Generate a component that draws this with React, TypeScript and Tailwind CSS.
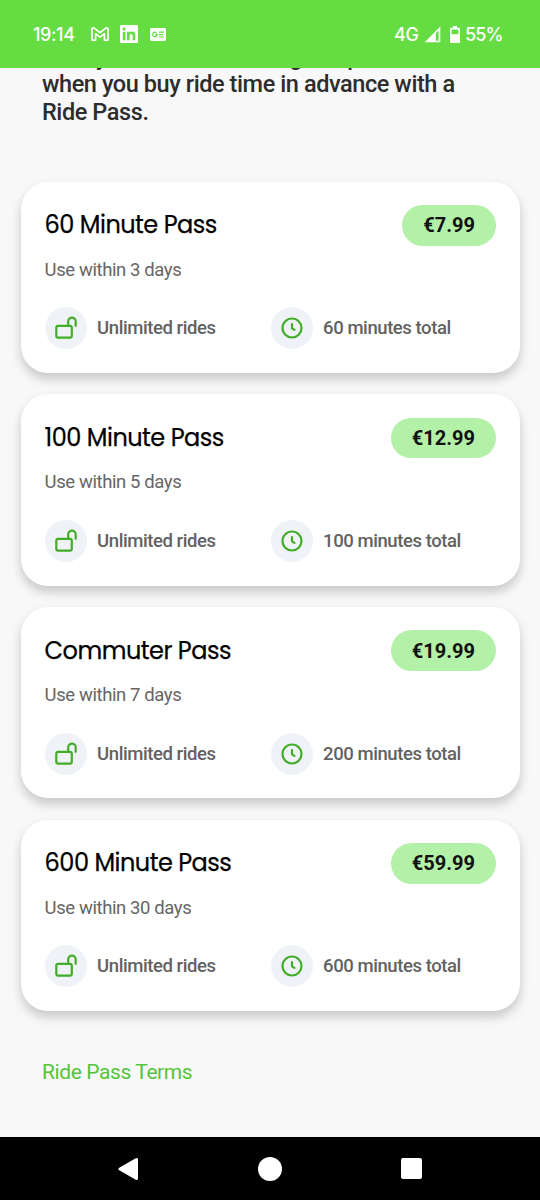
import { ReactNode } from 'react';

const passes = [
  { name: '60 Minute Pass', price: '€7.99', days: 3, minutes: 60 },
  { name: '100 Minute Pass', price: '€12.99', days: 5, minutes: 100 },
  { name: 'Commuter Pass', price: '€19.99', days: 7, minutes: 200 },
  { name: '600 Minute Pass', price: '€59.99', days: 30, minutes: 600 },
];

function StatusBar() {
  return (
    <header className="h-[68px] shrink-0 bg-[#64dc42] text-white flex items-center justify-between pl-[33px] pr-[37.5px] font-['Inter',sans-serif] text-[18px] font-medium relative z-10">
      <div className="flex items-center">
        <span className="w-[57.5px] tracking-[-0.4px]">19:14</span>
        <svg className="w-[18px] h-[14px]" viewBox="0 0 18 14" fill="none" stroke="currentColor" strokeWidth="1.7" strokeLinejoin="round">
          <path d="M1 2.2Q1 .9 2.2.9h.7L9 5.7 15.1.9h.7Q17 .9 17 2.2v10.9h-3.600V6.700L9 10.200 4.600 6.700v6.400H1z" />
        </svg>
        <svg className="w-[18px] h-[18px] ml-[11px]" viewBox="0 0 18 18">
          <rect width="18" height="18" rx="1.2" fill="currentColor" />
          <g fill="#64dc42">
            <circle cx="4.1" cy="4.1" r="1.5" />
            <path d="M2.800 6.800h2.600v8.400H2.800zM7 6.800h2.500v1.200c.6-.9 1.500-1.400 2.600-1.400 2.500 0 3.200 1.600 3.200 4v4.600h-2.600v-4.200c0-1.200-.2-2.100-1.400-2.100-1.200 0-1.700.9-1.700 2.100v4.200H7z" />
          </g>
        </svg>
        <svg className="w-[16px] h-[13px] ml-[12px]" viewBox="0 0 16 13">
          <rect width="16" height="13" rx="1.4" fill="currentColor" />
          <g fill="none" stroke="#64dc42" strokeWidth="1.2">
            <path d="M6.700 4.900A2.300 2.300 0 1 0 7.200 6.700H5" />
            <path d="M9 4.200h5M9 6.600h4M9 9h5" />
          </g>
        </svg>
      </div>
      <div className="flex items-center">
        <span className="w-[30px] tracking-[-0.3px]">4G</span>
        <svg className="w-[17px] h-[17px]" viewBox="0 0 17 17">
          <path d="M16.300.5v15.800H.7z" fill="currentColor" />
          <path d="M11.800 7.200 14.600 4.400v10.300h-2.800z" fill="#64dc42" />
        </svg>
        <svg className="w-[10px] h-[17px] ml-[9px]" viewBox="0 0 10 17">
          <path d="M3 0h4v1.800h2q1 0 1 1V16q0 1-1 1H1q-1 0-1-1V2.800q0-1 1-1h2z" fill="currentColor" />
          <path d="M1.600 3.600h6.800v4.600H1.600z" fill="#64dc42" />
        </svg>
        <span className="ml-[5px] tracking-[-0.9px]">55%</span>
      </div>
    </header>
  );
}

function Feature({ icon, children }: { icon: ReactNode; children: ReactNode }) {
  return (
    <div className="flex items-center gap-[10.5px]">
      <div className="w-[42px] h-[42px] rounded-full bg-[#eff2f6] text-[#43ad29] flex items-center justify-center">
        {icon}
      </div>
      <span className="text-[18.5px] leading-[24px] tracking-[-0.43px] font-medium text-[#626262] whitespace-nowrap">
        {children}
      </span>
    </div>
  );
}

function UnlockIcon() {
  return (
    <svg className="w-6 h-6" viewBox="0 0 24 24" fill="none" stroke="currentColor" strokeWidth="2.2" strokeLinecap="round" strokeLinejoin="round">
      <rect x="2.300" y="9.800" width="15.500" height="11.800" rx="1.800" />
      <path d="M14.200 9.800V5.400a3.750 3.750 0 0 1 7.500 0v4.400" />
    </svg>
  );
}

function ClockIcon() {
  return (
    <svg className="w-6 h-6" viewBox="0 0 24 24" fill="none" stroke="currentColor" strokeWidth="2.2" strokeLinecap="round" strokeLinejoin="round">
      <circle cx="12" cy="12" r="9.500" />
      <path d="M12 8v4.300l2.400 1.600" />
    </svg>
  );
}

export default function App() {
  return (
    <div className="w-[540px] h-[1200px] flex flex-col overflow-hidden bg-[#f8f8f8] font-['Roboto',sans-serif]">
      <StatusBar />
      <main className="flex-1 min-h-0 overflow-hidden">
        <h1 className="-mt-[24.500px] ml-[42px] text-[23.5px] leading-[27.5px] tracking-[-0.42px] font-medium text-[#2d2d2d] whitespace-nowrap">
          Take your rides home at great prices
          <br />
          when you buy ride time in advance with a
          <br />
          Ride Pass.
        </h1>
        <ul className="mt-[55.500px] ml-[21px] w-[499px] space-y-[21.300px]">
          {passes.map((pass) => (
            <li
              key={pass.name}
              className="h-[191.400px] rounded-[27px] bg-white pl-[23.600px] pr-6 pt-[23.500px] shadow-[0_6px_11px_rgba(0,0,0,0.2)]"
            >
              <div className="flex items-center justify-between h-[40.500px]">
                <h2 className="font-['Poppins',sans-serif] text-[24px] tracking-[-0.5px] text-black [-webkit-text-stroke:0.25px_black]">
                  {pass.name}
                </h2>
                <span className="h-full px-[21px] rounded-full bg-[#b4f1a8] text-[20px] font-bold text-[#111] flex items-center">
                  {pass.price}
                </span>
              </div>
              <p className="mt-[10px] text-[18.500px] leading-[28px] tracking-[-0.4px] text-[#666]">Use within {pass.days} days</p>
              <div className="mt-[23.700px] grid grid-cols-[226px_1fr]">
                <Feature icon={<UnlockIcon />}>Unlimited rides</Feature>
                <Feature icon={<ClockIcon />}>{pass.minutes} minutes total</Feature>
              </div>
            </li>
          ))}
        </ul>
        <a className="block mt-[46px] ml-[42px] text-[21px] leading-[30px] tracking-[-0.4px] text-[#56c33c]">Ride Pass Terms</a>
      </main>
      <nav className="h-[63px] shrink-0 bg-black text-white flex items-center pl-[118px]">
        <svg className="w-[21px] h-[24px]" viewBox="0 0 21 24" fill="currentColor" stroke="currentColor" strokeWidth="3" strokeLinejoin="round">
          <path d="M2 12 18.500 2.500v19z" />
        </svg>
        <div className="ml-[119px] w-6 h-6 rounded-full bg-white" />
        <div className="ml-[119px] w-[20.500px] h-[20.500px] rounded-[2px] bg-white" />
      </nav>
    </div>
  );
}
